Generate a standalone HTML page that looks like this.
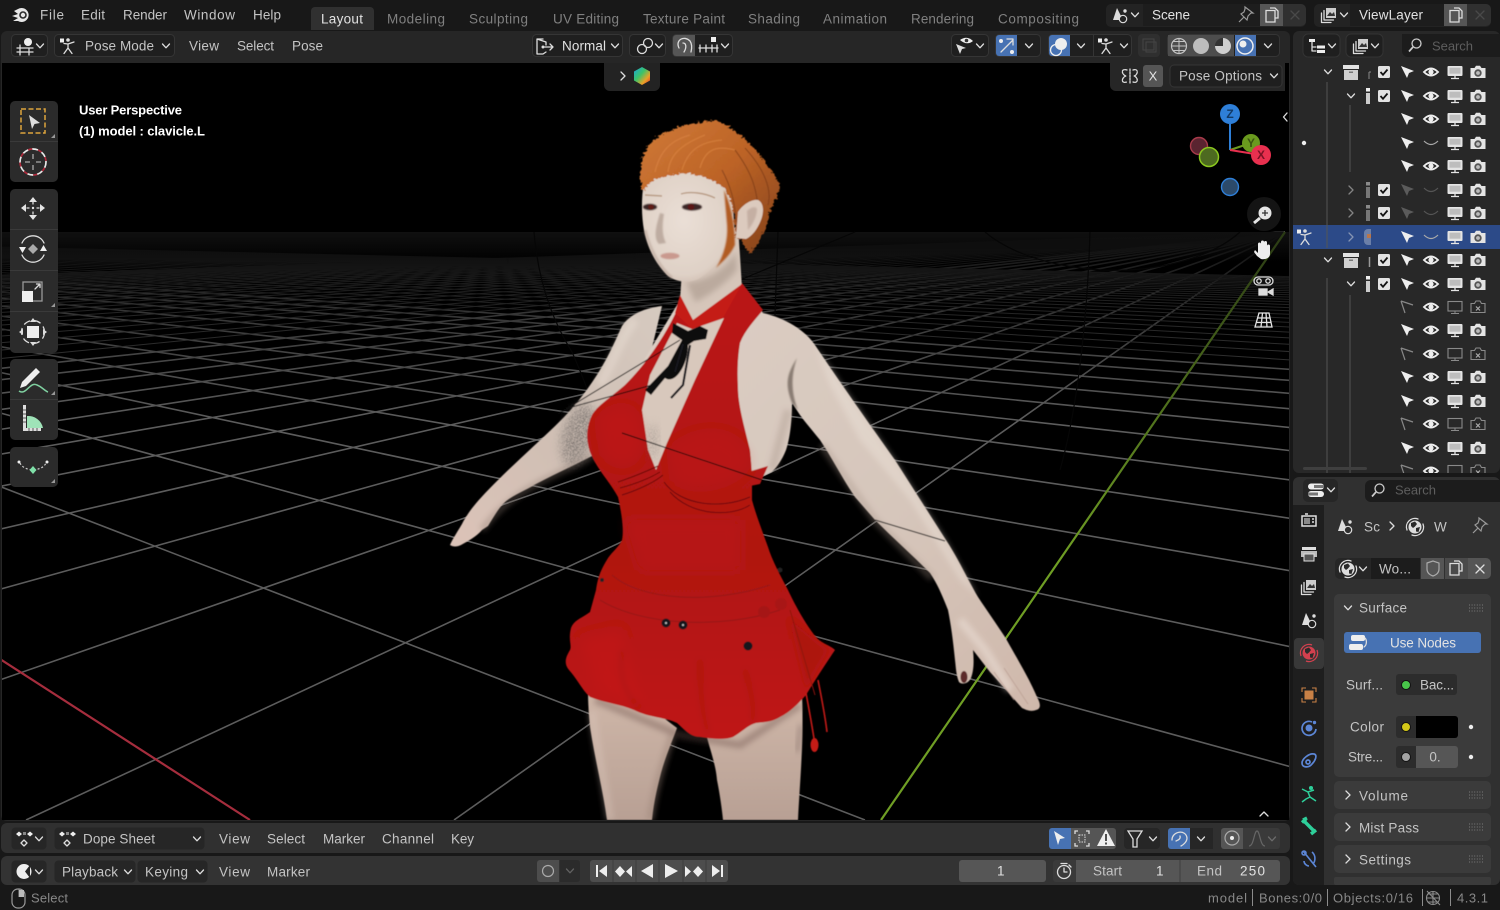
<!DOCTYPE html>
<html lang="en"><head><meta charset="utf-8"><title>Blender</title>
<style>
html,body{margin:0;padding:0;background:#181818;width:1500px;height:910px;overflow:hidden}
svg{display:block;filter:blur(.35px)}
text{font-family:"Liberation Sans",sans-serif;font-size:13.5px;fill:#c4c4c4;dominant-baseline:central}
.d{fill:#808080}.w{fill:#e2e2e2}.s{fill:#888;font-size:13px}.b{fill:#fff;font-weight:700;font-size:13px}
.ln{fill:none;stroke:#ddd;stroke-width:1.3;stroke-linecap:round;stroke-linejoin:round}
</style></head><body>
<svg xmlns="http://www.w3.org/2000/svg" width="1500" height="910" viewBox="0 0 1500 910">
<defs>
<clipPath id="vp"><rect x="2" y="63" width="1287" height="757"/></clipPath>
<clipPath id="ol"><rect x="1293" y="62" width="207" height="411"/></clipPath>
<linearGradient id="fade" x1="0" y1="0" x2="0" y2="1"><stop offset="0" stop-color="#000" stop-opacity=".88"/><stop offset=".45" stop-color="#000" stop-opacity=".4"/><stop offset="1" stop-color="#000" stop-opacity="0"/></linearGradient>
<linearGradient id="band" x1="0" y1="0" x2="0" y2="1"><stop offset="0" stop-color="#101010"/><stop offset="1" stop-color="#101010" stop-opacity="0"/></linearGradient>
<linearGradient id="gline" gradientUnits="userSpaceOnUse" x1="0" y1="232" x2="0" y2="560"><stop offset="0" stop-color="#2a3a14"/><stop offset="1" stop-color="#6f9e24"/></linearGradient>
<linearGradient id="skin" x1="0" y1="0" x2="1" y2="1"><stop offset="0" stop-color="#dccfc5"/><stop offset=".6" stop-color="#d6c6bb"/><stop offset="1" stop-color="#cfb8ab"/></linearGradient>
<linearGradient id="larm" x1="1" y1="0" x2="0" y2="1"><stop offset="0" stop-color="#d6cac0"/><stop offset=".5" stop-color="#cfbfb4"/><stop offset="1" stop-color="#dcc3b8"/></linearGradient>
<linearGradient id="leg" x1="0" y1="0" x2="0" y2="1"><stop offset="0" stop-color="#cfb7a9"/><stop offset="1" stop-color="#b8a094"/></linearGradient>
<linearGradient id="dress" x1="0" y1="0" x2="0" y2="1"><stop offset="0" stop-color="#ba1614"/><stop offset=".6" stop-color="#b01311"/><stop offset="1" stop-color="#bf1815"/></linearGradient>
<radialGradient id="face" cx=".45" cy=".45" r=".7"><stop offset="0" stop-color="#eadfd6"/><stop offset=".7" stop-color="#dfd1c6"/><stop offset="1" stop-color="#bfa89b"/></radialGradient>
<linearGradient id="hair" x1="0" y1="0" x2="1" y2="1"><stop offset="0" stop-color="#d07a38"/><stop offset=".5" stop-color="#bc6326"/><stop offset="1" stop-color="#82401a"/></linearGradient>
<linearGradient id="hex" x1="0" y1="0" x2="1" y2="1"><stop offset="0" stop-color="#16a4e0"/><stop offset=".42" stop-color="#3cc368"/><stop offset=".72" stop-color="#e8a228"/><stop offset="1" stop-color="#e62c2c"/></linearGradient>
<filter id="bl05"><feGaussianBlur stdDeviation=".5"/></filter>
<filter id="bl1"><feGaussianBlur stdDeviation=".8"/></filter>
<filter id="bl3" x="-50%" y="-50%" width="200%" height="200%"><feGaussianBlur stdDeviation="3"/></filter>
<filter id="bl6" x="-50%" y="-50%" width="200%" height="200%"><feGaussianBlur stdDeviation="6"/></filter>
<filter id="frz" x="-10%" y="-10%" width="120%" height="120%"><feTurbulence type="fractalNoise" baseFrequency=".3 .4" numOctaves="2" seed="3" result="n"/><feDisplacementMap in="SourceGraphic" in2="n" scale="6" xChannelSelector="R" yChannelSelector="G"/></filter>
<filter id="stip" x="-30%" y="-30%" width="160%" height="160%"><feGaussianBlur in="SourceAlpha" stdDeviation="5" result="a"/><feTurbulence type="fractalNoise" baseFrequency="1.1" numOctaves="2" result="n"/><feColorMatrix in="n" type="matrix" values="0 0 0 0 .17 0 0 0 0 .15 0 0 0 0 .14 0 0 0 6 -2.5"/><feComposite in2="a" operator="in"/></filter>

<path id="chev" class="ln" d="M-3.5-2 0 1.8 3.5-2"/>
<path id="chevr" class="ln" d="M-2-4 2 0-2 4"/>
<g id="arrow"><path d="M-6-6 7-1 2 1 0 6Z" fill="#eee"/></g>
<g id="arrowdim"><path d="M-6-6 7-1 2 1 0 6Z" fill="#5b5b5b"/></g>
<g id="arrowoff"><path d="M-6-6 6-2M-6-6-2 6" fill="none" stroke="#888" stroke-width="1.2"/></g>
<g id="eye"><path d="M-7 0Q0-7 7 0 0 7-7 0Z" fill="none" stroke="#eee" stroke-width="1.9"/><circle r="2.6" fill="#eee"/></g>
<path id="eyec" d="M-7-2Q0 5 7-2" fill="none" stroke="#aaa" stroke-width="1.2"/>
<path id="eyecd" d="M-7-2Q0 5 7-2" fill="none" stroke="#555" stroke-width="1.2"/>
<g id="mon"><rect x="-7.5" y="-6" width="15" height="10" rx="1" fill="#e4e4e4"/><rect x="-5.5" y="-4.3" width="11" height="6" fill="#bdbdbd"/><path d="M0 4v2M-4 6.5H4" stroke="#e4e4e4" stroke-width="1.3"/></g>
<g id="monoff"><rect x="-7" y="-5.5" width="14" height="9.5" fill="none" stroke="#8a8a8a" stroke-width="1.1"/><path d="M0 4v2M-4 6.5H4" stroke="#8a8a8a"/></g>
<g id="cam"><path d="M-7.5-4H-3.5L-2-6.2H2L3.5-4H7.5V6H-7.5Z" fill="#e4e4e4"/><circle cy="1" r="3.7" fill="#555"/><circle cy="1" r="1.9" fill="#bbb"/></g>
<g id="camoff"><path d="M-7-3.5H-3.5L-2-6H2L3.5-3.5H7V5.5H-7Z" fill="none" stroke="#8a8a8a" stroke-width="1.1"/><path d="M-2-.5 2 3.5M2-.5-2 3.5" stroke="#aaa" stroke-width="1.2"/></g>
<g id="ck"><rect x="-6" y="-6" width="12" height="12" rx="1.5" fill="#e2e2e2"/><path d="M-3.5 0-1 2.8 3.5-2.5" fill="none" stroke="#111" stroke-width="1.8"/></g>
<g id="full"><use href="#arrow" x="-1"/><use href="#eye" x="23"/><use href="#mon" x="47"/><use href="#cam" x="70"/></g>
<g id="closed"><use href="#arrow" x="-1"/><use href="#eyec" x="23"/><use href="#mon" x="47"/><use href="#cam" x="70"/></g>
<g id="dim"><use href="#arrowdim" x="-1"/><use href="#eyecd" x="23"/><use href="#mon" x="47"/><use href="#cam" x="70"/></g>
<g id="off"><use href="#arrowoff" x="-1"/><use href="#eye" x="23"/><use href="#monoff" x="47"/><use href="#camoff" x="70"/></g>
<g id="coll"><path d="M-8-7H8V-3H-8Z" fill="#e2e2e2"/><path d="M-7-2H7V8H-7Z" fill="#d0d0d0"/><rect x="-2" y="-.5" width="4" height="1.5" fill="#777"/></g>
<g id="i"><rect x="-2" y="-8" width="4" height="3.5" fill="#eee"/><rect x="-2" y="-3" width="4" height="11" fill="#ccc"/></g>
<g id="idim"><rect x="-2" y="-8" width="4" height="3.5" fill="#8a8a8a"/><rect x="-2" y="-3" width="4" height="11" fill="#777"/></g>
<g id="pose"><rect x="-8" y="-7.5" width="4" height="4" fill="#eee"/><circle cx="0" cy="-6" r="1.8" fill="#ddd"/><path class="ln" d="M-4-2.5 0-2 6-4M0-2 0 2-4 7.5M0 2 4 7.5"/></g>
<g id="v3d"><circle cx="3" cy="-4" r="4" fill="#eee"/><path class="ln" d="M-8 2H8M-8 6H8M-5-1V9M4 2V9"/></g>
<g id="scene"><path d="M-7 5-3-7 1 1-1 5Z" fill="#ddd"/><circle cx="5" cy="-4" r="1.7" fill="#ddd"/><circle cx="3" cy="4" r="3.7" fill="none" stroke="#ddd" stroke-width="1.2"/></g>
<g id="world"><circle r="6.5" fill="#ddd"/><path d="M-4-4 0-5.5 2-3 0-.5-2 1-4-1ZM1 1 5 0 3.5 5 1 4.5Z" fill="#2a2a2a"/><path class="ln" d="M-8 3A8.5 8.5 0 0 1 3-8M8-3A8.5 8.5 0 0 1-3 8"/></g>
<g id="vlayer"><rect x="-3" y="-7" width="10" height="10" fill="#ccc"/><path d="M-2 1 1-3 3-1 5-3 6 1Z" fill="#333"/><path class="ln" d="M-5-4.5V5H4.5M-7.5-2V7.5H2"/></g>
<g id="copy"><path d="M-6-4.5V7H3V-4.5ZM-2-7H3L6-4V3H3" fill="none" stroke="#ddd" stroke-width="1.3"/></g>
<path id="x" class="ln" d="M-4-4 4 4M4-4-4 4"/>
<path id="pin" fill="none" stroke="#999" stroke-width="1.2" d="M-7 7-2 2M-5-1 1 5 2 1 5-2 7-2-1-8V-6L-2-3Z"/>
<g id="search"><circle cx="1.5" cy="-1.5" r="4.5" fill="none" stroke="#ccc" stroke-width="1.3"/><path d="M-2 2-6 6.5" stroke="#ccc" stroke-width="1.7"/></g>
<g id="props"><rect x="-8" y="-6.5" width="16" height="6" rx="3" fill="#eee"/><rect x="-8" y="1" width="16" height="6" rx="3" fill="#eee"/><rect x="-2" y="-5" width="10" height="3" fill="#777"/><rect x="-8" y="2.5" width="10" height="3" fill="#777"/></g>
<g id="outl"><rect x="-8" y="-7" width="6" height="3" fill="#eee"/><path class="ln" d="M-5-4V5H-1M-5 1H-1"/><rect x="0" y="-.5" width="8" height="3" fill="#eee"/><rect x="0" y="4" width="8" height="3" fill="#eee"/></g>
<g id="dope"><path d="M-8-4-5-6.5-2-4-5-1.5ZM3-4 6-6.5 9-4 6-1.5Z" fill="#eee"/><rect x="-1" y="-6" width="3" height="3" fill="#888"/><path class="ln" d="M0 2 3 5 0 8-3 5Z" stroke-width="1"/></g>
<g id="grip"><path d="M-7-3H7M-7 0H7M-7 3H7" stroke="#7a7a7a" stroke-dasharray="1 1.6"/></g>
<path id="tri" d="M0 0-4 4H0Z" fill="#999"/>
</defs>

<rect width="1500" height="910" fill="#181818"/>

<!-- TOP BAR -->
<g transform="translate(21 15)">
<path d="M-3-6A7 7 0 1 1-3 6L-8 6-3 3-9 1-3-1-7-4Z" fill="#e6e6e6"/><circle cx="2" cy="0" r="3.8" fill="#2a2a2a"/><circle cx="2" cy="0" r="2.2" fill="#e6e6e6"/>
</g>
<text x="40" y="15" textLength="24">File</text><text x="81" y="15" textLength="24">Edit</text><text x="123" y="15" textLength="44">Render</text><text x="184" y="15" textLength="51">Window</text><text x="253" y="15" textLength="28">Help</text>
<path d="M311 30V11a4 4 0 0 1 4-4H370a4 4 0 0 1 4 4V30Z" fill="#303030"/>
<text x="321" y="19" textLength="42" class="w">Layout</text>
<text x="387" y="19" textLength="58" class="d">Modeling</text><text x="469" y="19" textLength="59" class="d">Sculpting</text><text x="553" y="19" textLength="66" class="d">UV Editing</text><text x="643" y="19" textLength="82" class="d">Texture Paint</text><text x="748" y="19" textLength="52" class="d">Shading</text><text x="823" y="19" textLength="64" class="d">Animation</text><text x="911" y="19" textLength="63" class="d">Rendering</text><text x="998" y="19" textLength="81" class="d">Compositing</text>

<rect x="1106" y="4" width="200" height="23" rx="5" fill="#232323"/>
<rect x="1143" y="4" width="117" height="22" fill="#1d1d1d"/>
<use href="#scene" x="1120" y="15"/><use href="#chev" x="1135" y="15"/>
<text x="1152" y="15" textLength="38" class="w">Scene</text><use href="#pin" x="1246" y="15"/>
<rect x="1260" y="4" width="23" height="22" fill="#565656"/><use href="#copy" x="1272" y="15"/>
<path d="M1283 4h18a5 5 0 0 1 5 5v12a5 5 0 0 1-5 5h-18Z" fill="#303030"/><use href="#x" x="1295" y="15" opacity=".15"/>

<rect x="1314" y="4" width="177" height="23" rx="5" fill="#232323"/>
<rect x="1350" y="4" width="94" height="22" fill="#1d1d1d"/>
<use href="#vlayer" x="1329" y="15"/><use href="#chev" x="1344" y="15"/>
<text x="1359" y="15" textLength="64" class="w">ViewLayer</text>
<rect x="1444" y="4" width="23" height="22" fill="#565656"/><use href="#copy" x="1456" y="15"/>
<path d="M1467 4h19a5 5 0 0 1 5 5v12a5 5 0 0 1-5 5h-19Z" fill="#303030"/><use href="#x" x="1480" y="15" opacity=".15"/>

<!-- VIEWPORT -->
<rect x="1" y="31" width="1289" height="790" rx="6" fill="#262626"/>
<rect x="2" y="63" width="1287" height="757" fill="#000"/>
<g clip-path="url(#vp)">
<!-- grid near -->
<path fill="none" stroke="#5c5c5c" stroke-width="1.6" d="M-660 232L865 820M-660 232L1485 820M-660 232L2105 820M-660 232L2725 820M-660 232L3345 820M-660 232L3965 820M-660 232L4585 820M-660 232L5205 820M-660 232L5825 820M-660 232L6445 820M-660 232L7065 820M-660 232L7685 820
M1285 232L454 820M1285 232L26 820M1285 232L-402 820M1285 232L-830 820M1285 232L-1258 820M1285 232L-1686 820M1285 232L-2114 820M1285 232L-2542 820M1285 232L-2970 820M1285 232L-3398 820M1285 232L-3826 820M1285 232L-4254 820"/>
<!-- grid far -->
<path fill="none" stroke="#3e3e3e" stroke-width="1" d="M-660 232L8305 820M-660 232L8925 820M-660 232L9545 820M-660 232L10165 820M-660 232L10785 820M-660 232L11405 820M-660 232L12025 820M-660 232L12645 820M-660 232L13265 820M-660 232L13885 820M-660 232L14505 820M-660 232L15125 820M-660 232L15745 820M-660 232L16365 820M-660 232L16985 820M-660 232L17605 820M-660 232L18225 820M-660 232L18845 820M-660 232L19465 820M-660 232L20085 820M-660 232L20705 820M-660 232L21325 820M-660 232L21945 820M-660 232L22565 820M-660 232L23185 820M-660 232L23805 820M-660 232L24425 820M-660 232L25045 820
M1285 232L-4682 820M1285 232L-5110 820M1285 232L-5538 820M1285 232L-5966 820M1285 232L-6394 820M1285 232L-6822 820M1285 232L-7250 820M1285 232L-7678 820M1285 232L-8106 820M1285 232L-8534 820M1285 232L-8962 820M1285 232L-9390 820M1285 232L-9818 820M1285 232L-10246 820M1285 232L-10674 820M1285 232L-11102 820M1285 232L-11530 820M1285 232L-11958 820M1285 232L-12386 820M1285 232L-12814 820M1285 232L-13242 820M1285 232L-13670 820M1285 232L-14098 820M1285 232L-14526 820M1285 232L-14954 820M1285 232L-15382 820M1285 232L-15810 820M1285 232L-16238 820"/>
<rect x="2" y="232" width="1287" height="190" fill="url(#fade)"/>
<rect x="2" y="232" width="1287" height="30" fill="url(#band)"/>
<path d="M0 659 250 820" stroke="#a52d3d" stroke-width="2.2" fill="none"/>
<path d="M881 820 1285 232" stroke="url(#gline)" stroke-width="2.2" fill="none"/>
<!-- thin dark curves -->
<g fill="none" stroke="#060606" stroke-width="1.2">
<path d="M534 232C538 280 552 320 572 352C580 370 586 385 590 398"/>
<path d="M1090 232C1088 300 1080 400 1060 470"/>
<path d="M985 232C1020 262 1090 276 1150 268C1190 262 1220 250 1240 232"/>
<path d="M778 232 775 315"/>
<path d="M740 280 855 232"/>
</g>

<!-- FIGURE -->
<g filter="url(#bl05)">
<!-- legs -->
<path d="M588 690C588 705 589 715 590 727 595 760 603 790 607 820H652C654 800 658 785 661 773 666 755 672 742 677 728L640 700Z" fill="url(#leg)"/>
<path d="M705 730C710 750 716 765 717 780 720 795 722 810 723 820H798C800 780 804 740 802 695L760 715Z" fill="url(#leg)"/>
<path d="M672 735C664 760 654 790 650 820" stroke="#9a8276" stroke-width="7" opacity=".45" filter="url(#bl3)" fill="none"/>
<path d="M592 712C597 750 606 790 610 820" stroke="#e2cfc4" stroke-width="8" opacity=".3" filter="url(#bl3)" fill="none"/>
<path d="M801 725 797 752" stroke="#7a6660" stroke-width="4" opacity=".5" filter="url(#bl3)"/>
<path d="M595 700 680 735 740 745 800 705" stroke="#6a5048" stroke-width="7" opacity=".4" filter="url(#bl3)" fill="none"/>
<!-- left arm -->
<path d="M662 306C645 308 630 314 622 326 612 348 600 378 566 415 550 432 520 458 494 484 478 500 468 512 462 524 456 534 452 540 450 545 453 547 457 547 461 545 468 541 476 537 482 530L488 526C495 515 500 505 509 499 520 492 528 489 536 484 555 474 575 465 592 456L630 440Z" fill="url(#larm)"/>
<path d="M482 530C495 512 515 495 540 482 560 472 575 465 592 456" stroke="#8e7c72" stroke-width="6" opacity=".4" filter="url(#bl3)" fill="none"/>
<path d="M635 320C620 340 612 365 600 385" stroke="#eee2d8" stroke-width="9" opacity=".4" filter="url(#bl3)" fill="none"/>
<ellipse cx="578" cy="435" rx="15" ry="32" transform="rotate(16 578 435)" fill="#000" filter="url(#stip)"/>
<!-- right arm and torso skin -->
<path d="M763 313C785 318 805 330 815 345 835 375 870 425 895 460L946 540C958 558 968 580 978 597 988 612 997 625 1005 637 1018 660 1030 680 1037 697 1041 704 1041 709 1036 710 1031 712 1026 710 1022 708 1012 697 1000 683 990 672L973 650C974 660 974 670 971 678 968 684 962 685 959 682 956 675 956 668 955 660 953 640 951 625 948 610 942 595 938 585 930 573 912 555 893 538 875 520L855 497C842 478 832 458 820 440 812 430 805 422 800 415L792 403C792 420 790 438 786 450 782 460 777 467 772 472L735 490 640 490 620 400 680 300 740 285Z" fill="url(#skin)"/>
<path d="M792 403C785 385 786 375 797 358 790 378 792 395 798 410Z" fill="#55483f" opacity=".6" filter="url(#bl1)"/>
<path d="M815 345C835 375 870 425 895 460L946 540 978 597 960 580 910 500 860 440 830 385Z" fill="#efe5dc" opacity=".4" filter="url(#bl3)"/>
<path d="M822 445 875 520 932 578" stroke="#a38f83" stroke-width="7" opacity=".35" filter="url(#bl3)" fill="none"/>
<path d="M772 470 788 410" stroke="#a38f83" stroke-width="8" opacity=".35" filter="url(#bl3)" fill="none"/>
<path d="M960 620 985 650 1010 690" stroke="#efe3db" stroke-width="8" opacity=".5" filter="url(#bl3)" fill="none"/>
<path d="M994 672 1014 700M1004 668 1028 704" stroke="#b89a90" stroke-width="1" opacity=".7" fill="none"/>
<ellipse cx="964" cy="677" rx="3.5" ry="6" fill="#5c2a2c"/>
<!-- neck -->
<path d="M682 270 680 300 693 324 742 288 738 225 720 240Z" fill="#d6c6ba"/>
<path d="M686 282C705 282 725 270 736 252L737 270C725 285 705 298 695 302Z" fill="#a8978b" opacity=".6" filter="url(#bl3)"/>
<!-- back strap -->
<path d="M748 472 768 466 760 484 750 486Z" fill="#b41412"/>
<!-- dress -->
<path d="M677 310C668 330 650 360 625 385 610 398 598 405 592 415 586 428 586 440 590 452 596 468 610 482 618 497 622 515 624 530 622 540 618 548 612 552 608 558 602 568 598 575 596 590L590 612C582 618 574 620 571 628 568 640 572 645 570 650 565 658 564 664 569 670 578 680 582 690 590 697 605 703 620 704 634 710 650 718 665 717 677 723 685 730 690 737 700 737 712 739 725 740 733 737 742 732 748 725 756 723 765 722 772 722 780 717 790 712 798 704 806 695 815 680 825 665 835 650 830 645 822 644 816 637 806 625 795 605 788 590 780 575 772 560 768 547 762 530 756 515 752 500L752 482C752 470 751 460 750 450 744 425 738 405 738 387 737 370 738 355 740 343 745 330 755 320 763 310L742 283 723 312 692 322Z" fill="url(#dress)"/>
<!-- chest opening -->
<path d="M677 323 650 375 642 410 648 450 656 470 667 443 695 380 724 318 692 329Z" fill="#d8c8bc"/>
<g opacity=".55"><ellipse cx="653" cy="442" rx="5" ry="18" fill="#000" filter="url(#stip)"/></g>
<!-- collar -->
<path d="M680 295 675 313 692 329 723 318 742 284 693 320Z" fill="#c41b19"/>
<!-- dress shading -->
<path d="M600 420C615 405 640 400 640 440 640 465 620 470 605 455Z" fill="#cb211e" opacity=".28" filter="url(#bl6)"/>
<path d="M672 450C700 425 740 430 748 460 745 480 700 495 675 480Z" fill="#c5201e" opacity=".28" filter="url(#bl6)"/>
<path d="M625 520H740V570H640Z" fill="#c4201c" opacity=".3" filter="url(#bl6)"/>
<path d="M580 640 600 690 640 705 620 630Z" fill="#cf241e" opacity=".3" filter="url(#bl6)"/>
<path d="M790 620 806 690 828 650Z" fill="#9a1010" opacity=".35" filter="url(#bl3)"/>
<path d="M622 650C618 675 625 695 640 708M700 660C700 690 702 715 708 732M745 670C752 695 755 710 752 722" stroke="#8c0e0c" stroke-width="3" opacity=".35" fill="none" filter="url(#bl3)"/>
<g fill="none" stroke="#6a0f0e" stroke-width="1">
<path d="M618 482C630 478 645 472 658 466M620 488C635 484 650 478 660 472M622 495C638 490 655 482 663 475"/>
<path d="M664 482C680 505 720 510 750 497M670 492C690 515 730 518 750 505"/>
<path d="M612 575C640 600 710 605 770 585" stroke="#951513"/>
<path d="M600 600C640 625 720 630 780 610" stroke="#951513"/>
<path d="M790 610 815 695" stroke="#8c1210"/>
</g>
<circle cx="764" cy="612" r="6" fill="#a51412"/><circle cx="781" cy="604" r="6" fill="#a81512"/>
<circle cx="666" cy="623" r="4.5" fill="#15191b"/><circle cx="683" cy="625" r="4.5" fill="#15191b"/><circle cx="748" cy="646" r="4.5" fill="#15191b"/>
<circle cx="666" cy="623" r="1" fill="#ccc"/><circle cx="683" cy="625" r="1" fill="#ccc"/>
<circle cx="602" cy="580" r="2" fill="#222"/><circle cx="780" cy="570" r="2.5" fill="#222"/>
<!-- strings -->
<path d="M806 693C810 715 812 725 815 745M818 680C822 700 825 715 827 732" fill="none" stroke="#c41a18" stroke-width="1.6"/>
<ellipse cx="814.5" cy="745" rx="4" ry="7" fill="#c41a18"/>
<!-- bow -->
<path d="M673 323 688 331 700 326 708 330 706 339 694 341 688 345C688 365 675 385 665 378L651 395 645 390 668 366 682 340 672 333Z" fill="#0c0c0e"/>
<path d="M683 344 675 372M690 345 683 385 671 398" stroke="#15151a" stroke-width="2.2" fill="none"/>
<!-- hair back -->
<path d="M728 130 780 187 768 213 763 233 750 253 742 243 736 190Z" fill="#a0501f" filter="url(#frz)"/>
<!-- face -->
<path d="M643 188C641 205 642 222 645 235 650 255 660 268 668 276 676 282 690 284 700 278 712 270 725 258 731 243L735 236 732 190 700 170 660 172Z" fill="url(#face)"/>
<path d="M660 213C656 226 653 238 659 244L666 243C662 235 662 225 664 214Z" fill="#a08a7e" opacity=".55" filter="url(#bl1)"/>
<path d="M645 230C650 250 660 268 672 278" stroke="#a89184" stroke-width="3" opacity=".4" fill="none" filter="url(#bl1)"/>
<ellipse cx="650" cy="207" rx="7" ry="3.2" fill="#3a2828" filter="url(#bl05)"/><circle cx="651" cy="207" r="2.8" fill="#5e1a18"/>
<ellipse cx="692" cy="207" rx="10" ry="3.6" fill="#3a2828" filter="url(#bl05)"/><circle cx="691" cy="207" r="3.2" fill="#5a1816"/>
<path d="M645 195 662 196M681 194C690 191 705 193 715 198" stroke="#a88468" stroke-width="1.4" fill="none" opacity=".7"/>
<ellipse cx="670" cy="256" rx="9.5" ry="3.2" fill="#c9998e" filter="url(#bl05)"/>
<!-- hair front -->
<path d="M640 178C640 160 645 148 652 142 662 132 675 128 690 124L717 120C728 126 740 134 748 142 758 152 768 165 775 175L780 187C778 198 772 205 769 213 768 224 764 230 762 236 758 244 754 250 750 253 746 248 743 243 741 240L736 238C735 222 733 205 727 192 722 186 718 182 712 180 700 175 690 173 680 174 670 176 662 177 655 179 650 182 646 186 643 192Z" fill="url(#hair)" filter="url(#frz)"/>
<path d="M724 190C731 205 735 225 735 245 730 256 722 262 716 268 724 255 728 240 727 225Z" fill="#b15c24" filter="url(#bl1)"/>
<g fill="none" stroke="#de8846" stroke-width="1.3" opacity=".55">
<path d="M655 172C660 150 672 140 690 135M668 172C670 155 680 145 705 135M682 170C688 150 700 142 722 140M700 168C705 150 715 145 735 150"/>
</g>
<g fill="none" stroke="#763716" stroke-width="1.2" opacity=".6">
<path d="M722 170C730 185 735 200 736 222M735 150C750 170 760 190 758 225M745 148C765 170 772 190 768 205"/>
</g>
<!-- ear -->
<path d="M738 212C743 204 752 199 758 200 764 203 764 212 761 220 757 230 752 236 746 239L736 238Z" fill="#dccabe"/>
<path d="M747 211C751 207 756 206 757 209 757 216 753 224 748 230Z" fill="#c0a99d" opacity=".8" filter="url(#bl1)"/>
<!-- thin black lines -->
<g fill="none" stroke="#0c0c0c" stroke-width="1">
<path d="M558 414 680 340"/><path d="M572 407 652 385"/><path d="M622 433 762 480"/><path d="M875 520 945 541"/>
</g>
</g>

<!-- viewport overlays -->
<text x="79" y="110" textLength="103" class="b">User Perspective</text>
<text x="79" y="131" textLength="126" class="b">(1) model : clavicle.L</text>

<!-- toolbar -->
<g fill="#2b2b2b">
<rect x="10" y="101" width="48" height="81" rx="5"/>
<rect x="10" y="189" width="48" height="164" rx="5"/>
<rect x="10" y="359" width="48" height="81" rx="5"/>
<rect x="10" y="447" width="48" height="40" rx="5"/>
</g>
<path d="M10 141.5H58M10 229.5H58M10 270.5H58M10 311.5H58M10 399.5H58" stroke="#3a3a3a"/>
<use href="#tri" x="55" y="134"/><use href="#tri" x="55" y="303"/><use href="#tri" x="55" y="391"/><use href="#tri" x="55" y="479"/>
<rect x="21" y="109" width="24" height="24" fill="none" stroke="#dea53c" stroke-width="1.5" stroke-dasharray="5 2.5"/>
<path d="M29 115 40 123 34.5 124 32 129Z" fill="#ddd"/>
<circle cx="33" cy="162" r="13" fill="none" stroke="#e8e8e8" stroke-width="1.7" stroke-dasharray="6 4"/>
<circle cx="33" cy="162" r="13" fill="none" stroke="#b02a3c" stroke-width="1.7" stroke-dasharray="4 6" stroke-dashoffset="-6"/>
<path d="M33 154v5M33 165v5M25 162h5M36 162h5" stroke="#aaa" stroke-width="1.3"/>
<g fill="#e4e4e4"><path d="M33 197 37 202H29ZM33 220 29 215H37ZM21 208 26 204V212ZM45 208 40 204V212Z"/><circle cx="33" cy="208" r="1.2"/></g>
<path class="ln" d="M29 208h-2M39 208h-2M33 204v-2M33 214v-2" stroke-width="1"/>
<path class="ln" d="M22 243A12 12 0 0 1 44 243M44 255A12 12 0 0 1 22 255" stroke-width="1.1"/>
<path d="M33 244 38 249 33 254 28 249Z" fill="#aaa"/><path d="M19 247H26L22.5 253ZM40 251H47L43.5 245Z" fill="#eee"/>
<rect x="23" y="282" width="19" height="19" fill="none" stroke="#999" stroke-width="1.3"/>
<rect x="22" y="291" width="11" height="11" fill="#eee"/><path class="ln" d="M35 289 40 284M36.5 284H40V287.5"/>
<circle cx="33" cy="332" r="11.5" fill="none" stroke="#ddd" stroke-width="1.3" stroke-dasharray="7 4"/><rect x="27" y="326" width="12" height="12" fill="#eee"/><path d="M33 318 36 322H30ZM33 346 30 342H36ZM19 332 23 329V335ZM47 332 43 329V335Z" fill="#ddd"/>
<path d="M36 368 40 372 26 386 20 388 22 382Z" fill="#eee"/><path d="M19 391C26 396 30 381 37 385 42 387 45 391 48 392" fill="none" stroke="#7fd0a0" stroke-width="1.5"/>
<path d="M23 405H26V428H41V431H23Z" fill="#ddd"/><path d="M27 416A15 15 0 0 1 43 428H27Z" fill="#9fe3b8"/><path d="M23 410h3M23 414h3M23 418h3M23 422h3M29 428v3M33 428v3M37 428v3" stroke="#555"/>
<path d="M20 463C24 472 42 472 46 463" fill="none" stroke="#ccc" stroke-width="1.2" stroke-dasharray="2 2"/><circle cx="19" cy="462" r="1.5" fill="#eee"/><circle cx="47" cy="462" r="1.5" fill="#eee"/><path d="M33 466 36.5 470 33 474 29.5 470Z" fill="#7fe0a8"/>

<!-- gizmo -->
<path d="M1230 150V124" stroke="#2e7fd8" stroke-width="2"/><path d="M1230 150 1251 143" stroke="#6a9a1e" stroke-width="2"/><path d="M1230 150 1261 155" stroke="#e8304f" stroke-width="2"/>
<circle cx="1199" cy="146" r="8.5" fill="#5a2430" stroke="#a83a4a" stroke-width="1.4"/>
<circle cx="1209" cy="157" r="9.5" fill="#4d6a20" stroke="#8bc81e" stroke-width="1.5"/>
<circle cx="1230" cy="187" r="8.5" fill="#2c4a6a" stroke="#2e7fd8" stroke-width="1.4"/>
<circle cx="1230" cy="114" r="10" fill="#2e7fd8"/><text x="1230" y="114" text-anchor="middle" style="font-size:12px;font-weight:700;fill:#123a66">Z</text>
<circle cx="1251" cy="143" r="9" fill="#6a9a1e"/><text x="1251" y="143" text-anchor="middle" style="font-size:12px;font-weight:700;fill:#3a5510">Y</text>
<circle cx="1261" cy="155" r="10" fill="#e8304f"/><text x="1261" y="155" text-anchor="middle" style="font-size:12px;font-weight:700;fill:#7a1225">X</text>
<!-- nav icons -->
<circle cx="1264" cy="214" r="17" fill="#141414"/>
<circle cx="1265" cy="213" r="6.5" fill="#e6e6e6"/><path d="M1260 218 1254 223" stroke="#e6e6e6" stroke-width="3"/><path d="M1262 213h6M1265 210v6" stroke="#333" stroke-width="1.3"/>
<path d="M1255 250 1258 253V244a1 1 0 0 1 3 0V250 242a1 1 0 0 1 3 0V250 242.5a1 1 0 0 1 3 0V251 246a1 1 0 0 1 3 0V254C1270 258 1265 260 1261 259L1257 256 1254 252Z" fill="#eee"/>
<g fill="none" stroke="#ddd" stroke-width="1.3"><rect x="1254" y="277" width="19" height="8" rx="4"/><circle cx="1259" cy="281" r="2.2"/><circle cx="1268" cy="281" r="2.2"/><rect x="1259" y="289" width="8" height="6" fill="#ddd"/><path d="M1268 292 1273 289V295Z" fill="#ddd"/></g>
<path d="M1259 313H1269L1272 327H1255ZM1262.5 313 1261 327M1266 313 1267 327M1257.5 318H1270M1256.5 322.5H1271" fill="none" stroke="#e4e4e4" stroke-width="1.3"/>
<path d="M1287 113 1283.5 117 1287 121" class="ln" stroke="#aaa"/>
</g>

<!-- VIEWPORT HEADER -->
<g fill="#1f1f1f" stroke="#353535">
<rect x="11.5" y="34.5" width="36" height="22" rx="4"/>
<rect x="54.5" y="34.5" width="120" height="22" rx="4"/>
<rect x="532.5" y="34.5" width="90" height="22" rx="4"/>
<rect x="629.5" y="34.5" width="36" height="22" rx="4"/>
<rect x="672.5" y="34.5" width="60" height="22" rx="4"/>
<rect x="951.5" y="34.5" width="37" height="22" rx="4"/>
<rect x="995.5" y="34.5" width="45" height="22" rx="4"/>
<rect x="1048.5" y="34.5" width="83" height="22" rx="4"/>
<rect x="1167.5" y="34.5" width="112" height="22" rx="4"/>
</g>
<use href="#v3d" x="25" y="46"/><use href="#chev" x="40" y="46"/>
<use href="#pose" x="68" y="46"/><text x="85" y="46" textLength="69">Pose Mode</text><use href="#chev" x="166" y="46"/>
<text x="189" y="46" textLength="30">View</text><text x="237" y="46" textLength="37">Select</text><text x="292" y="46" textLength="31">Pose</text>
<g transform="translate(545 46)"><path class="ln" d="M-2-7H-8V8H-2L1 6M-8-7 1-4V-1"/><circle cx="-2" cy="1" r="1.5" fill="#ddd"/><path class="ln" d="M0 1H8M5-2 8 1 5 4"/></g>
<text x="562" y="46" textLength="44" class="w">Normal</text><use href="#chev" x="615" y="46"/>
<g class="ln" fill="none"><circle cx="642" cy="49" r="4.5" fill="none" stroke="#ddd" stroke-width="1.3"/><circle cx="648" cy="43" r="4.5" fill="none" stroke="#ddd" stroke-width="1.3"/></g><use href="#chev" x="659" y="46"/>
<path d="M673 38a3 3 0 0 1 3-3H695V56H676a3 3 0 0 1-3-3Z" fill="#565656"/>
<path class="ln" d="M679 48C675 40 684 35 690 41 692 44 692 48 691 52M684 52C687 47 686 43 683 43" stroke="#bbb" stroke-width="1.7"/>
<rect x="711" y="37" width="5" height="5" fill="#eee"/><path class="ln" d="M699 48H718M700 45V52M706 45V52M712 45V52M717 45V52" stroke-width="1"/><use href="#chev" x="725" y="46"/>
<g transform="translate(963 46)"><path d="M-3-6Q4-11 10-5 4 0-3-6Z" fill="#eee"/><circle cx="3.5" cy="-5.5" r="1.8" fill="#333"/><path d="M-7-2 3 2-1 3-3 8Z" fill="#ddd"/></g><use href="#chev" x="980" y="46"/>
<path d="M996 38a3 3 0 0 1 3-3H1017V56H999a3 3 0 0 1-3-3Z" fill="#4772b3"/>
<path class="ln" d="M1001 52 1013 40M1007 39H1013V45" stroke="#eee" stroke-width="1.5"/><circle cx="1001" cy="41" r="2" fill="#eee"/><circle cx="1012" cy="52" r="2" fill="#eee"/><use href="#chev" x="1029" y="46"/>
<path d="M1049 38a3 3 0 0 1 3-3H1070V56H1052a3 3 0 0 1-3-3Z" fill="#4772b3"/>
<circle cx="1061" cy="44" r="6" fill="#eee"/><circle cx="1056" cy="50" r="5.5" fill="none" stroke="#eee" stroke-width="1.3"/><use href="#chev" x="1081" y="46"/>
<path d="M1093.5 35V56" stroke="#353535"/><use href="#pose" x="1106" y="46"/><use href="#chev" x="1124" y="46"/>
<rect x="1138" y="34" width="22" height="23" rx="4" fill="#2f2f2f"/><rect x="1143" y="39" width="11" height="11" fill="none" stroke="#444"/><rect x="1146" y="42" width="10" height="10" fill="none" stroke="#444"/>
<rect x="1168" y="35" width="22" height="21" fill="#4d4d4d"/><rect x="1190" y="35" width="22" height="21" fill="#4d4d4d"/><rect x="1212" y="35" width="22" height="21" fill="#4d4d4d"/><rect x="1235" y="35" width="21" height="21" fill="#4772b3"/>
<circle cx="1179" cy="46" r="7.5" fill="none" stroke="#c4c4c4" stroke-width="1.2"/><path d="M1171.5 46H1186.5M1179 38.5V53.5M1173 41.5H1185M1173 50.5H1185" stroke="#c4c4c4"/>
<circle cx="1201" cy="46" r="8" fill="#bdbdbd"/>
<circle cx="1223" cy="46" r="8" fill="#333"/><path d="M1223 38A8 8 0 0 1 1223 54 8 8 0 0 1 1215 46H1223Z" fill="#cfcfcf"/>
<circle cx="1245" cy="46" r="8" fill="none" stroke="#eee" stroke-width="1.5"/><circle cx="1243" cy="44" r="3.5" fill="#eee"/><use href="#chev" x="1268" y="46"/>

<!-- notch + options -->
<path d="M604 63H660V85a6 6 0 0 1-6 6H610a6 6 0 0 1-6-6Z" fill="#232323"/>
<use href="#chevr" x="623" y="76"/>
<path d="M642 67 650 71.5V80.5L642 85 634 80.5V71.5Z" fill="url(#hex)"/>
<path d="M1110 63H1285V91H1116a6 6 0 0 1-6-6Z" fill="#262626"/>
<path class="ln" d="M1130 69V83M1127 70C1120 68 1122 75 1126 76 1122 77 1120 84 1127 82M1133 70C1139 68 1138 75 1134 76 1138 77 1139 84 1133 82" stroke="#aaa" stroke-width="1.2" stroke-dasharray="2 1"/>
<rect x="1143" y="65" width="20" height="22" rx="3" fill="#555"/><text x="1153" y="76" text-anchor="middle" class="w" style="font-size:13px">X</text>
<rect x="1170" y="65" width="112" height="22" rx="4" fill="#1f1f1f" stroke="#353535"/>
<text x="1179" y="76" textLength="83">Pose Options</text><use href="#chev" x="1274" y="76"/>

<!-- OUTLINER -->
<rect x="1293" y="31" width="207" height="442" rx="6" fill="#282828"/>
<rect x="1303" y="34" width="37" height="23" rx="5" fill="#1f1f1f" stroke="#333"/><use href="#outl" x="1317" y="46"/><use href="#chev" x="1332" y="46"/>
<rect x="1346" y="34" width="37" height="23" rx="5" fill="#1f1f1f" stroke="#333"/><use href="#vlayer" x="1361" y="46"/><use href="#chev" x="1375" y="46"/>
<path d="M1402 34H1500V57H1408a6 6 0 0 1-6-6Z" fill="#1c1c1c"/><use href="#search" x="1415" y="45"/><text x="1432" y="46" textLength="41" class="s" style="fill:#5e5e5e">Search</text>
<g clip-path="url(#ol)">
<rect x="1293" y="225" width="207" height="24" fill="#2c4a88"/>
<path d="M1327 82V248M1327 278V473M1350 105V172M1350 295V473" stroke="#555"/>
<use href="#chev" x="1328" y="72"/><use href="#coll" x="1351" y="72"/><path d="M1369 72V79M1369 72h2" stroke="#888"/><use href="#ck" x="1384" y="72"/><use href="#full" x="1408" y="72"/>
<use href="#chev" x="1351" y="96"/><use href="#i" x="1368" y="96"/><use href="#ck" x="1384" y="96"/><use href="#full" x="1408" y="96"/>
<use href="#full" x="1408" y="119"/>
<circle cx="1304" cy="143" r="2.2" fill="#eee"/><use href="#closed" x="1408" y="143"/>
<use href="#full" x="1408" y="166"/>
<use href="#chevr" x="1351" y="190" opacity=".5"/><use href="#idim" x="1368" y="190"/><use href="#ck" x="1384" y="190"/><use href="#dim" x="1408" y="190"/>
<use href="#chevr" x="1351" y="213" opacity=".5"/><use href="#idim" x="1368" y="213"/><use href="#ck" x="1384" y="213"/><use href="#dim" x="1408" y="213"/>
<use href="#pose" x="1305" y="237"/><use href="#chevr" x="1351" y="237" opacity=".5"/><path d="M1371 229h-3a4 4 0 0 0-4 4v8a4 4 0 0 0 4 4h3Z" fill="#6b7fa8"/><rect x="1367" y="234" width="4" height="4" fill="#b8754a"/>
<use href="#closed" x="1408" y="237"/>
<use href="#chev" x="1328" y="260"/><use href="#coll" x="1351" y="260"/><path d="M1369.5 257V267" stroke="#999" stroke-width="1.5"/><use href="#ck" x="1384" y="260"/><use href="#full" x="1408" y="260"/>
<use href="#chev" x="1351" y="284"/><use href="#i" x="1368" y="284"/><use href="#ck" x="1384" y="284"/><use href="#full" x="1408" y="284"/>
<use href="#off" x="1408" y="307"/><use href="#full" x="1408" y="330"/><use href="#off" x="1408" y="354"/><use href="#full" x="1408" y="377"/><use href="#full" x="1408" y="401"/><use href="#off" x="1408" y="424"/><use href="#full" x="1408" y="448"/><use href="#off" x="1408" y="471"/>
</g>
<rect x="1303" y="467" width="64" height="3" rx="1.5" fill="#3f3f3f"/>

<!-- PROPERTIES -->
<rect x="1293" y="477" width="207" height="408" rx="6" fill="#303030"/>
<rect x="1303" y="479" width="35" height="23" rx="5" fill="#262626"/><use href="#props" x="1316" y="490"/><use href="#chev" x="1331" y="490"/>
<path d="M1371 480H1500V502H1371a6 6 0 0 1-6-6V486a6 6 0 0 1 6-6Z" fill="#1c1c1c"/><use href="#search" x="1378" y="490"/><text x="1395" y="490" textLength="41" class="s" style="fill:#5e5e5e">Search</text>
<path d="M1293 505H1324V885H1299a6 6 0 0 1-6-6Z" fill="#1e1e1e"/>
<rect x="1294" y="638" width="30" height="31" rx="4" fill="#383838"/>
<!-- tabs -->
<g transform="translate(1309 521)"><rect x="-7" y="-5" width="14" height="10" fill="none" stroke="#ddd" stroke-width="1.5"/><rect x="-5" y="-3" width="6" height="6" fill="#888"/><path d="M3-2H5M3 1H5M-4-7H-1" stroke="#ddd" stroke-width="1.4"/></g>
<g transform="translate(1309 554)"><rect x="-7" y="-7" width="14" height="3" fill="#ddd"/><rect x="-8" y="-3" width="16" height="6" fill="#bbb"/><rect x="-5" y="0" width="10" height="7" fill="#555" stroke="#ddd"/></g>
<use href="#vlayer" x="1309" y="587"/><use href="#scene" x="1309" y="620"/>
<g transform="translate(1309 653)"><circle r="6.5" fill="#d2404e"/><path d="M-4-4 0-5.5 2-3 0-.5-2 1-4-1ZM1 1 5 0 3.5 5 1 4.5Z" fill="#2a2a2a"/><path d="M-8 3A8.5 8.5 0 0 1 3-8M8-3A8.5 8.5 0 0 1-3 8" fill="none" stroke="#d2404e" stroke-width="1.3"/></g>
<g transform="translate(1309 695)"><rect x="-4.5" y="-4.5" width="9" height="9" fill="#c98146"/><path d="M-7-3V-7H-3M3-7H7V-3M7 3V7H3M-3 7H-7V3" fill="none" stroke="#c98146" stroke-width="1.1"/></g>
<g transform="translate(1309 728)"><circle r="3.5" fill="#5c86d6"/><path d="M3-6A7 7 0 1 0 7 1" fill="none" stroke="#5c86d6" stroke-width="1.7"/><circle cx="5.5" cy="-5.5" r="1.7" fill="#5c86d6"/></g>
<g transform="translate(1309 761)" fill="none" stroke="#5c86d6" stroke-width="1.7"><path d="M-7 2C-7-2 0-8 5-7 9-6 6 0 3 3 0 7-7 7-7 2Z"/><circle cx="-1" cy="1" r="2"/></g>
<g transform="translate(1309 794)" fill="none" stroke="#2ecf9a" stroke-width="1.5"><circle cx="2" cy="-6" r="1.3" fill="#2ecf9a"/><path d="M-7-5-1-2 5-4M-1-2 1 3 7 7M1 3-3 5-7 8"/></g>
<path d="M1304 821 1309 826 1314 831M1302 822.5 1306 819M1307 818 1303 820M1311 834 1316 830" stroke="#2ecf9a" stroke-width="3.4" fill="none"/>
<g transform="translate(1309 859)" fill="none" stroke="#5c86d6" stroke-width="1.6"><path d="M-6-8 7 8"/><circle cx="-5" cy="-6" r="2"/><path d="M3-7A7 8 0 0 1 4 5M-5 2C-5 5-2 7 0 7"/></g>
<!-- main -->
<use href="#scene" x="1345" y="526"/><text x="1364" y="527" textLength="16">Sc</text><use href="#chevr" x="1392" y="526"/><use href="#world" x="1415" y="527"/><text x="1434" y="527" textLength="13">W</text><use href="#pin" x="1480" y="526"/>
<path d="M1340 558H1371V579H1340a5 5 0 0 1-5-5V563a5 5 0 0 1 5-5Z" fill="#262626"/><use href="#world" x="1348" y="569"/><use href="#chev" x="1363" y="569"/>
<rect x="1371" y="558" width="49" height="21" fill="#1c1c1c"/><text x="1379" y="569" textLength="32">Wo...</text>
<rect x="1421" y="558" width="23" height="21" fill="#555"/><path d="M1427 563 1433 561 1439 563V569C1439 573 1436 575 1433 576 1430 575 1427 573 1427 569Z" fill="none" stroke="#aaa" stroke-width="1.2"/>
<rect x="1445" y="558" width="23" height="21" fill="#4a4a4a"/><use href="#copy" x="1456" y="568"/>
<path d="M1468 558H1486a5 5 0 0 1 5 5V574a5 5 0 0 1-5 5H1468Z" fill="#555"/><use href="#x" x="1480" y="569"/>

<rect x="1334" y="594" width="157" height="183" rx="5" fill="#3b3b3b"/>
<use href="#chev" x="1348" y="608"/><text x="1359" y="608" textLength="48">Surface</text><use href="#grip" x="1476" y="608"/>
<rect x="1344" y="632" width="137" height="21" rx="3" fill="#4772b3"/><g fill="#eee"><rect x="1351" y="635" width="14" height="6" rx="2"/><rect x="1349" y="644" width="14" height="6" rx="2"/></g><path class="ln" d="M1365 638C1367 640 1367 645 1364 647"/><text x="1390" y="643" textLength="66" class="w">Use Nodes</text>
<text x="1346" y="685" textLength="37">Surf...</text>
<rect x="1396" y="674" width="61" height="21" rx="3" fill="#2c2c2c"/><circle cx="1406" cy="685" r="4.5" fill="#48c64a" stroke="#111"/><text x="1420" y="685" textLength="34">Bac...</text>
<text x="1350" y="727" textLength="34">Color</text>
<path d="M1399 716H1416V738H1399a3 3 0 0 1-3-3V719a3 3 0 0 1 3-3Z" fill="#2c2c2c"/><circle cx="1406" cy="727" r="4.5" fill="#d4c818" stroke="#111"/>
<path d="M1416 716H1455a3 3 0 0 1 3 3V735a3 3 0 0 1-3 3H1416Z" fill="#000"/><circle cx="1471" cy="727" r="2.2" fill="#eee"/>
<text x="1348" y="757" textLength="35">Stre...</text>
<path d="M1399 746H1416V768H1399a3 3 0 0 1-3-3V749a3 3 0 0 1 3-3Z" fill="#2c2c2c"/><circle cx="1406" cy="757" r="4.5" fill="#a2a2a2" stroke="#111"/>
<path d="M1416 746H1455a3 3 0 0 1 3 3V765a3 3 0 0 1-3 3H1416Z" fill="#565656"/><text x="1435" y="757" text-anchor="middle">0.</text><circle cx="1471" cy="757" r="2.2" fill="#eee"/>
<g fill="#3b3b3b"><rect x="1334" y="781" width="157" height="28" rx="5"/><rect x="1334" y="813" width="157" height="28" rx="5"/><rect x="1334" y="845" width="157" height="28" rx="5"/><rect x="1334" y="877" width="157" height="8" rx="2"/></g>
<use href="#chevr" x="1348" y="795"/><text x="1359" y="796" textLength="49">Volume</text><use href="#grip" x="1476" y="795"/>
<use href="#chevr" x="1348" y="827"/><text x="1359" y="828" textLength="60">Mist Pass</text><use href="#grip" x="1476" y="827"/>
<use href="#chevr" x="1348" y="859"/><text x="1359" y="860" textLength="52">Settings</text><use href="#grip" x="1476" y="859"/>

<!-- DOPE SHEET -->
<rect x="1" y="823" width="1289" height="30" rx="6" fill="#303030"/>
<rect x="11.5" y="827.5" width="35" height="22" rx="4" fill="#262626"/><use href="#dope" x="24" y="838"/><use href="#chev" x="39" y="839"/>
<rect x="54.5" y="827.5" width="150" height="22" rx="4" fill="#262626"/><use href="#dope" x="67" y="838"/><text x="83" y="839" textLength="72">Dope Sheet</text><use href="#chev" x="197" y="839"/>
<text x="219" y="839" textLength="31">View</text><text x="267" y="839" textLength="38">Select</text><text x="323" y="839" textLength="42">Marker</text><text x="382" y="839" textLength="52">Channel</text><text x="451" y="839" textLength="23">Key</text>
<path d="M1049 831a3 3 0 0 1 3-3H1071V849H1052a3 3 0 0 1-3-3Z" fill="#4772b3"/><path d="M1054 831 1065 838 1060 839 1058 845Z" fill="#eee"/>
<path d="M1071 828H1113a3 3 0 0 1 3 3V846a3 3 0 0 1-3 3H1071Z" fill="#555"/>
<path d="M1075 834V831H1078M1086 831H1089V834M1089 843V846H1086M1078 846H1075V843" fill="none" stroke="#ddd" stroke-width="1.3"/><rect x="1079" y="835" width="6" height="7" fill="none" stroke="#ddd" stroke-dasharray="1.5 1"/>
<path d="M1106 829 1115 846H1097Z" fill="#eee"/><path d="M1106 834V841M1106 842.5V844.5" stroke="#333" stroke-width="1.7"/>
<rect x="1124" y="828" width="36" height="21" rx="4" fill="#262626"/><path d="M1128 831H1142L1137 839V847H1133V839Z" fill="none" stroke="#ddd" stroke-width="1.3"/><use href="#chev" x="1153" y="839"/>
<path d="M1168 831a3 3 0 0 1 3-3H1190V849H1171a3 3 0 0 1-3-3Z" fill="#4772b3"/><path d="M1172 840C1172 831 1186 829 1187 838 1187 842 1183 845 1181 846M1176 841C1178 840 1181 839 1180 836" class="ln" stroke="#eee" stroke-width="1.7"/>
<rect x="1190" y="828" width="23" height="21" fill="#262626"/><use href="#chev" x="1201" y="839"/>
<path d="M1221 831a3 3 0 0 1 3-3H1243V849H1224a3 3 0 0 1-3-3Z" fill="#555"/><circle cx="1232" cy="838" r="7" fill="none" stroke="#aaa" stroke-width="1.2"/><circle cx="1232" cy="838" r="2" fill="#eee"/>
<path d="M1243 828H1277a3 3 0 0 1 3 3V846a3 3 0 0 1-3 3H1243Z" fill="#3a3a3a"/><path d="M1249 846C1254 846 1254 831 1257 831 1260 831 1260 846 1265 846" fill="none" stroke="#666" stroke-width="1.2"/><use href="#chev" x="1272" y="839" opacity=".3"/>
<path d="M1260 816 1264 812 1268 816" class="ln" stroke="#bbb"/>

<!-- TIMELINE -->
<rect x="1" y="856" width="1289" height="29" rx="6" fill="#333"/>
<rect x="11.5" y="860.5" width="35" height="22" rx="4" fill="#262626"/><circle cx="24" cy="871.5" r="7.5" fill="#eee"/><path d="M30 865 25 871.5 30 878Z" fill="#262626"/><use href="#chev" x="39" y="872"/>
<rect x="54.5" y="860.5" width="81" height="22" rx="4" fill="#262626"/><rect x="137.5" y="860.5" width="70" height="22" rx="4" fill="#262626"/>
<text x="62" y="872" textLength="56">Playback</text><use href="#chev" x="128" y="872"/><text x="145" y="872" textLength="43">Keying</text><use href="#chev" x="200" y="872"/>
<text x="219" y="872" textLength="31">View</text><text x="267" y="872" textLength="43">Marker</text>
<path d="M537 863a3 3 0 0 1 3-3H559V882H540a3 3 0 0 1-3-3Z" fill="#4d4d4d"/><circle cx="548" cy="871" r="5.5" fill="none" stroke="#aaa" stroke-width="1.2"/>
<path d="M560 860H577a3 3 0 0 1 3 3V879a3 3 0 0 1-3 3H560Z" fill="#2b2b2b"/><use href="#chev" x="570" y="871" opacity=".3"/>
<rect x="590" y="860" width="138" height="22" rx="3" fill="#4d4d4d"/>
<path d="M613 860V882M636 860V882M659 860V882M683 860V882M706 860V882" stroke="#3d3d3d"/>
<g fill="#eee"><path d="M596 865H598V877H596ZM607 865V877L599 871Z"/><path d="M620 866 625 871.5 620 877 615 871.5ZM632 866V877L626 871.5Z"/><path d="M653 864V878L641 871Z"/><path d="M665 864V878L678 871Z"/><path d="M685 866V877L691 871.5ZM698 866 703 871.5 698 877 693 871.5Z"/><path d="M712 865V877L720 871ZM721 865H723V877H721Z"/></g>
<rect x="959" y="860" width="87" height="22" rx="3" fill="#565656"/><text x="997" y="871" class="w" textLength="8">1</text>
<path d="M1056 860H1076V882H1056a3 3 0 0 1-3-3V863a3 3 0 0 1 3-3Z" fill="#3a3a3a"/>
<circle cx="1064" cy="872" r="6.5" fill="none" stroke="#ddd" stroke-width="1.3"/><path d="M1064 868V872H1067M1061 863.5H1067M1069 865 1071 867" class="ln"/>
<path d="M1076 860H1277a3 3 0 0 1 3 3V879a3 3 0 0 1-3 3H1076Z" fill="#565656"/><path d="M1180 860V882" stroke="#3d3d3d"/>
<text x="1093" y="871" textLength="29">Start</text><text x="1156" y="871" class="w" textLength="8">1</text><text x="1197" y="871" textLength="25">End</text><text x="1240" y="871" textLength="25" class="w">250</text>

<!-- STATUS -->
<rect x="12" y="889" width="13" height="19" rx="6" fill="none" stroke="#999" stroke-width="1.2"/><path d="M19 889V897" stroke="#999"/><rect x="19" y="890" width="5" height="7" fill="#bbb"/>
<text x="31" y="898" textLength="37" class="s">Select</text>
<text x="1208" y="898" textLength="39" class="s">model</text><path d="M1252.5 889V906M1327.5 889V906M1422.5 889V906M1450.5 889V906" stroke="#8c8c8c"/>
<text x="1259" y="898" textLength="63" class="s">Bones:0/0</text><text x="1333" y="898" textLength="80" class="s">Objects:0/16</text>
<g transform="translate(1433 898)" fill="none" stroke="#8c8c8c" stroke-width="1.1"><circle r="6.5"/><path d="M-6.5 0H6.5M0-6.5V6.5M-5-4H5M-5 4H5M-6-7 7 7"/></g>
<text x="1457" y="898" textLength="31" class="s">4.3.1</text>
</svg>
</body></html>
